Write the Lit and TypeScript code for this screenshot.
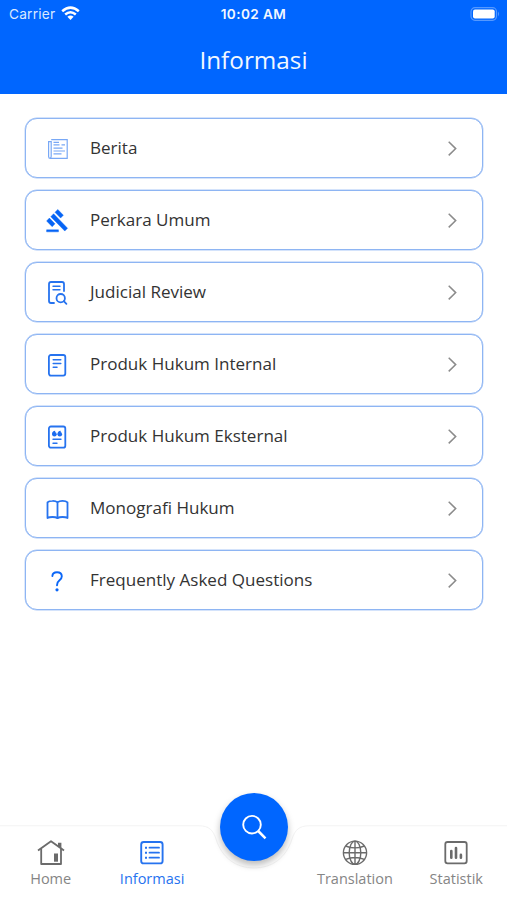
import { LitElement, html, css, svg } from "lit";
import { customElement, property } from "lit/decorators.js";

const menuIcons: Record<string, unknown> = {
  news: svg`<g fill="none" stroke="#78a8f6" stroke-width="1.2">
    <path d="M5.2 4.6H21.2V23.3H4.3Q2.6 23.3 2.6 21.4V6.6H5.2V21.2Q5.2 23 4 23.2"/>
    <path d="M7.5 7.3H13M7.5 9.8H13.5M15.5 9.8H19M7.5 13.2H16.5M7.5 16H19M7.5 18.9H15.5"/></g>`,
  gavel: svg`<path fill="#0664f5" stroke="#0664f5" stroke-width=".4" transform="translate(-.4 1.4) scale(.99 1.02)" d="M1 21h12v2H1zM5.245 8.07l2.83-2.827 14.14 14.142-2.828 2.828zM12.317 1l5.657 5.656-2.83 2.83-5.654-5.66zM3.825 9.485l5.657 5.657-2.828 2.828-5.657-5.657z"/>`,
  review: svg`<g fill="none" stroke="#2673ef" stroke-width="1.8" stroke-linecap="round">
    <path d="M8 24H5Q3 24 3 22V5Q3 3 5 3H16Q18 3 18 5V12"/><path d="M7 7.2H14M7 10.8H14" stroke-width="1.4"/>
    <circle cx="14.7" cy="19.2" r="4.2"/><path d="M17.8 22.2L20.4 24.8"/></g>`,
  doc: svg`<g fill="none" stroke="#2673ef" stroke-width="1.8" stroke-linecap="round">
    <rect x="2.9" y="4" width="16.4" height="20.6" rx="2"/><path d="M7.2 8.7H14.8M7.2 12.5H14.8M7.2 16.3H11" stroke-width="1.5"/></g>`,
  quote: svg`<g fill="none" stroke="#2673ef" stroke-width="1.8" stroke-linecap="round">
    <rect x="2.9" y="3.5" width="16.4" height="21.2" rx="2"/><path d="M7 16.3H15M7 20.2H11" stroke-width="1.4"/></g>
    <g fill="#1b6cf0"><circle cx="8.4" cy="11.2" r="2.3"/><circle cx="13.8" cy="11.2" r="2.3"/>
    <path d="M6.1 11.2Q6.1 8 9.2 7.8V9.5L8.2 11.2ZM11.5 11.2Q11.5 8 14.7 7.8V9.5L13.7 11.2Z"/></g>`,
  book: svg`<path fill="none" stroke="#2673ef" stroke-width="1.8" stroke-linejoin="round" d="M11.5 7.4Q9.7 5.7 6.5 5.8Q2.9 5.8 1.5 7.4V23Q3.2 22 6.5 22Q9.8 22 11.5 23.2Q13.2 22 16.5 22Q19.8 22 21.5 23V7.4Q20 5.8 16.5 5.8Q13.2 5.8 11.5 7.4V23"/>`,
  help: svg`<path fill="none" stroke="#0a66f7" stroke-width="1.9" stroke-linecap="round" d="M6.4 9Q6.6 5.3 11 5.3Q15.7 5.3 15.8 9.2Q15.8 11.4 13.5 13.2Q11.1 15 11 18.2"/><circle cx="11" cy="22.8" r="1.6" fill="#0a66f7"/>`,
};

const tabIcons: Record<string, unknown> = {
  home: svg`<g fill="none" stroke="currentColor" stroke-width="1.8" stroke-linejoin="round"><path d="M1 11.6L14 2.2L27 11.6"/><path d="M4.2 9.6V25H24V9.6"/></g><path d="M21 3.8H24.4V9.4L21 7Z" fill="currentColor"/><rect x="17" y="14.5" width="4" height="8.2" fill="currentColor"/>`,
  list: svg`<g fill="none" stroke="currentColor" stroke-width="1.9"><rect x="3.2" y="3" width="21.4" height="21.4" rx="2.5"/><path d="M11.5 8.7H21M11.5 13.7H21M11.5 18.7H21" stroke-width="1.8" stroke-linecap="round"/><path d="M7 8.7H9M7 13.7H9M7 18.7H9"/></g>`,
  globe: svg`<g fill="none" stroke="currentColor" stroke-width="1.4"><circle cx="14" cy="13.7" r="11.6"/><ellipse cx="14" cy="13.7" rx="5.8" ry="11.6"/><path d="M14 2V25M2.4 13.7H25.6M4.7 7Q9 8.9 14 8.9T23.3 7M4.7 20.4Q9 18.5 14 18.5T23.3 20.4"/></g>`,
  chart: svg`<g fill="none" stroke="currentColor"><rect x="3.3" y="3" width="21.4" height="21.4" rx="2.3" stroke-width="1.8"/><g stroke-width="2.6" stroke-linecap="round"><path d="M9.3 12V18.7M14 9V18.7M18.9 15.9V18.7"/></g></g>`,
};

@customElement("menu-row")
class MenuRow extends LitElement {
  @property() icon = "";
  @property() label = "";
  static styles = css`
    :host { display: flex; align-items: center; box-sizing: border-box; height: 60px; padding: 0 24px 0 20px;
      border: 1px solid #8eb5f3; border-radius: 12px; background: #fff; box-shadow: 0 0 0 .4px #a9c7f7; }
    .icon { width: 24px; height: 28px; margin-top: 2px; flex: none; }
    .label { flex: 1; margin: 0 0 0 20px; font-size: 17.05px; line-height: 24px; color: #333; white-space: nowrap; }
    .chevron { width: 10px; height: 16px; flex: none; }
  `;
  render() {
    return html`<svg class="icon" viewBox="0 0 24 28">${menuIcons[this.icon]}</svg>
      <span class="label">${this.label}</span>
      <svg class="chevron" viewBox="0 0 10 16"><path d="M.7 1.8L7.7 8.6L.7 15.4" fill="none" stroke="#8b8b8b" stroke-width="1.5"/></svg>`;
  }
}

@customElement("tab-item")
class TabItem extends LitElement {
  @property() icon = "";
  @property() label = "";
  static styles = css`
    :host { display: flex; flex-direction: column; align-items: center; font-size: 14.5px; color: #858585; }
    .icon { width: 28px; height: 27px; color: #6b6b6b; }
    :host([active]), :host([active]) .icon { color: #2673ef; }
    .label { line-height: 20px; margin-top: 3px; white-space: nowrap; }
  `;
  render() {
    return html`<svg class="icon" viewBox="0 0 28 27">${tabIcons[this.icon]}</svg><span class="label">${this.label}</span>`;
  }
}

@customElement("app-root")
class AppRoot extends LitElement {
  static styles = css`
    :host { display: flex; flex-direction: column; height: 900px; overflow: hidden; background: #fff; font-family: "Open Sans", "Noto Sans", sans-serif; }
    .header { height: 93.5px; background: #0066ff; color: #f2f8ff; flex: none; }
    .status { display: grid; grid-template-columns: 1fr auto 1fr; align-items: center; height: 27px; padding: 0 7px 0 9px;
      font-family: Inter, "Liberation Sans", sans-serif; font-size: 13.7px; }
    .carrier { display: flex; align-items: center; gap: 6px; color: #d9e9ff; letter-spacing: .2px; }
    .time { font-weight: 600; font-size: 13.6px; letter-spacing: .4px; margin-right: 2px; }
    .battery { justify-self: end; }
    .title { margin: 16px 0 0; text-align: center; font-size: 24.3px; line-height: 34px; font-weight: 400; }
    .list { display: flex; flex-direction: column; gap: 12px; padding: 24.5px 24.5px 0 25px; flex: 1; }
    .nav { position: relative; display: grid; grid-template-columns: 1fr 1fr 1fr 1fr 1fr; height: 74px; padding-top: 13px; box-sizing: border-box; flex: none; }
    .edge { position: absolute; left: 0; top: -1px; width: 507px; height: 74px; }
    tab-item { position: relative; }
    .search { position: absolute; left: 220px; top: -33px; width: 68px; height: 68px; padding: 0; border: 0; border-radius: 50%;
      background: #0066ff; box-shadow: 0 4px 7px rgba(0,0,0,.27); display: grid; place-items: center; }
  `;
  render() {
    const rows = [
      ["news", "Berita"], ["gavel", "Perkara Umum"], ["review", "Judicial Review"], ["doc", "Produk Hukum Internal"],
      ["quote", "Produk Hukum Eksternal"], ["book", "Monografi Hukum"], ["help", "Frequently Asked Questions"],
    ];
    return html`
      <header class="header">
        <div class="status">
          <span class="carrier">Carrier
            <svg width="19" height="15" viewBox="0 0 19 15"><g fill="none" stroke="#fff" stroke-width="2.5"><path d="M1.2 5.3Q9.5 -2 17.8 5.3"/><path d="M4.2 8.5Q9.5 3.9 14.8 8.5"/></g><path d="M6.4 10.8Q9.5 8.3 12.6 10.8L9.5 14Z" fill="#fff"/></svg>
          </span>
          <span class="time">10:02 AM</span>
          <svg class="battery" width="30" height="14" viewBox="0 0 30 14"><rect x="1" y=".7" width="25.5" height="12.6" rx="4" fill="none" stroke="#5599ff" stroke-width="1.2"/><rect x="3" y="2.6" width="21.7" height="8.8" rx="2" fill="#fff"/><path d="M28 4.6Q30 7 28 9.4Z" fill="#5599ff"/></svg>
        </div>
        <h1 class="title">Informasi</h1>
      </header>
      <main class="list">${rows.map(([i, l]) => html`<menu-row .icon=${i} .label=${l}></menu-row>`)}</main>
      <nav class="nav">
        <svg class="edge" viewBox="0 0 507 74"><path d="M0 .8H199C209 .8 213 5 216 14C222 33 236 43 254 43C272 43 286 33 292 14C295 5 299 .8 309 .8H507" fill="none" stroke="#f3f3f3"/></svg>
        <tab-item .icon=${"home"} .label=${"Home"}></tab-item>
        <tab-item active .icon=${"list"} .label=${"Informasi"}></tab-item>
        <span></span>
        <tab-item .icon=${"globe"} .label=${"Translation"}></tab-item>
        <tab-item .icon=${"chart"} .label=${"Statistik"}></tab-item>
        <button class="search" aria-label="Search"><svg width="28" height="28" viewBox="0 0 28 28"><g fill="none" stroke="#fff" stroke-width="1.9"><circle cx="12" cy="11.7" r="8.8"/><path d="M18.2 18L25.5 25.4" stroke-width="2.5"/></g></svg></button>
      </nav>`;
  }
}
